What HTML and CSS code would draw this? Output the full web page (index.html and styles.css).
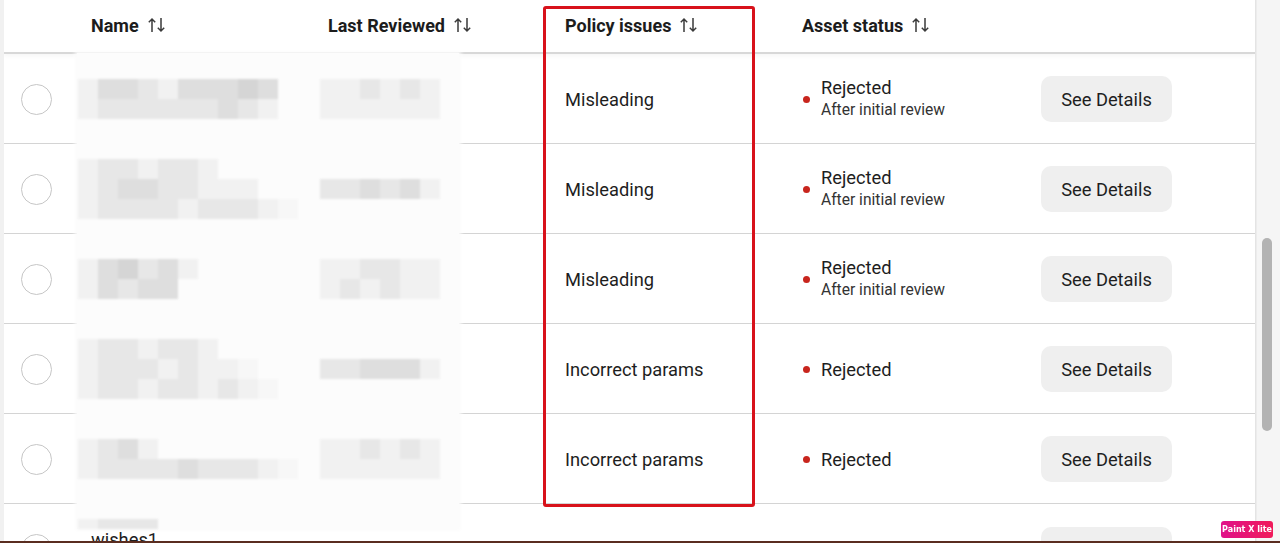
FILE: index.html
```html
<!DOCTYPE html>
<html>
<head>
<meta charset="utf-8">
<link rel="stylesheet" href="styles.css">
</head>
<body>
<div class="app">
  <div class="gutter"></div>
  <div class="table">
    <div class="thead">
      <div></div>
      <div class="th">Name <svg class="sort" viewBox="0 0 18 16"><path d="M4 15V2M0.8 5.2L4 2l3.2 3.2M13 1v13M9.8 10.8L13 14l3.2-3.2"/></svg></div>
      <div class="th">Last Reviewed <svg class="sort" viewBox="0 0 18 16"><path d="M4 15V2M0.8 5.2L4 2l3.2 3.2M13 1v13M9.8 10.8L13 14l3.2-3.2"/></svg></div>
      <div class="th">Policy issues <svg class="sort" viewBox="0 0 18 16"><path d="M4 15V2M0.8 5.2L4 2l3.2 3.2M13 1v13M9.8 10.8L13 14l3.2-3.2"/></svg></div>
      <div class="th">Asset status <svg class="sort" viewBox="0 0 18 16"><path d="M4 15V2M0.8 5.2L4 2l3.2 3.2M13 1v13M9.8 10.8L13 14l3.2-3.2"/></svg></div>
      <div></div>
    </div>

    <div class="row">
      <div class="sel"><span class="radio"></span></div>
      <div></div><div></div>
      <div class="policy">Misleading</div>
      <div class="status"><span class="dot"></span><div><div class="st">Rejected</div><div class="sub">After initial review</div></div></div>
      <div class="act"><button class="btn">See Details</button></div>
    </div>
    <div class="row">
      <div class="sel"><span class="radio"></span></div>
      <div></div><div></div>
      <div class="policy">Misleading</div>
      <div class="status"><span class="dot"></span><div><div class="st">Rejected</div><div class="sub">After initial review</div></div></div>
      <div class="act"><button class="btn">See Details</button></div>
    </div>
    <div class="row">
      <div class="sel"><span class="radio"></span></div>
      <div></div><div></div>
      <div class="policy">Misleading</div>
      <div class="status"><span class="dot"></span><div><div class="st">Rejected</div><div class="sub">After initial review</div></div></div>
      <div class="act"><button class="btn">See Details</button></div>
    </div>
    <div class="row">
      <div class="sel"><span class="radio"></span></div>
      <div></div><div></div>
      <div class="policy">Incorrect params</div>
      <div class="status"><span class="dot"></span><div><div class="st">Rejected</div></div></div>
      <div class="act"><button class="btn">See Details</button></div>
    </div>
    <div class="row">
      <div class="sel"><span class="radio"></span></div>
      <div></div><div></div>
      <div class="policy">Incorrect params</div>
      <div class="status"><span class="dot"></span><div><div class="st">Rejected</div></div></div>
      <div class="act"><button class="btn">See Details</button></div>
    </div>

    <div class="blur">
      <div class="orow">
        <div class="mz name-mz">
          <i class="s1"></i><i class="s3"></i><i class="s3"></i><i class="s2"></i><i class="s1"></i><i class="s3"></i><i class="s3"></i><i class="s3"></i><i class="s4"></i><i class="s3"></i><i></i>
          <i class="s1"></i><i class="s2"></i><i class="s2"></i><i class="s2"></i><i class="s2"></i><i class="s2"></i><i class="s2"></i><i class="s3"></i><i class="s2"></i><i class="s1"></i><i></i>
        </div>
        <div class="mz date-mz">
          <i class="s1"></i><i class="s1"></i><i class="s2"></i><i class="s1"></i><i class="s2"></i><i class="s1"></i>
          <i class="s1"></i><i class="s1"></i><i class="s1"></i><i class="s1"></i><i class="s1"></i><i class="s1"></i>
        </div>
      </div>
      <div class="orow">
        <div class="mz name-mz">
          <i class="s1"></i><i class="s2"></i><i class="s2"></i><i class="s1"></i><i class="s2"></i><i class="s2"></i><i class="s1"></i><i></i><i></i><i></i><i></i>
          <i class="s1"></i><i class="s2"></i><i class="s3"></i><i class="s3"></i><i class="s2"></i><i class="s2"></i><i class="s1"></i><i class="s1"></i><i class="s1"></i><i></i><i></i>
          <i class="s1"></i><i class="s2"></i><i class="s2"></i><i class="s2"></i><i class="s2"></i><i class="s1"></i><i class="s2"></i><i class="s2"></i><i class="s2"></i><i class="s1"></i><i class="s0"></i>
        </div>
        <div class="mz date-mz">
          <i class="s2"></i><i class="s2"></i><i class="s3"></i><i class="s2"></i><i class="s3"></i><i class="s1"></i>
        </div>
      </div>
      <div class="orow">
        <div class="mz name-mz">
          <i class="s1"></i><i class="s3"></i><i class="s4"></i><i class="s2"></i><i class="s3"></i><i class="s1"></i><i></i><i></i><i></i><i></i><i></i>
          <i class="s1"></i><i class="s3"></i><i class="s2"></i><i class="s3"></i><i class="s3"></i><i></i><i></i><i></i><i></i><i></i><i></i>
        </div>
        <div class="mz date-mz">
          <i class="s1"></i><i class="s1"></i><i class="s2"></i><i class="s2"></i><i class="s1"></i><i class="s1"></i>
          <i class="s1"></i><i class="s2"></i><i class="s1"></i><i class="s2"></i><i class="s1"></i><i class="s1"></i>
        </div>
      </div>
      <div class="orow">
        <div class="mz name-mz">
          <i class="s1"></i><i class="s2"></i><i class="s2"></i><i class="s1"></i><i class="s2"></i><i class="s2"></i><i class="s1"></i><i></i><i></i><i></i><i></i>
          <i class="s1"></i><i class="s2"></i><i class="s2"></i><i class="s2"></i><i class="s1"></i><i class="s2"></i><i class="s1"></i><i class="s1"></i><i class="s0"></i><i></i><i></i>
          <i class="s1"></i><i class="s2"></i><i class="s2"></i><i class="s1"></i><i class="s2"></i><i class="s2"></i><i class="s1"></i><i class="s2"></i><i class="s1"></i><i class="s0"></i><i></i>
        </div>
        <div class="mz date-mz">
          <i class="s2"></i><i class="s2"></i><i class="s3"></i><i class="s3"></i><i class="s3"></i><i class="s1"></i>
        </div>
      </div>
      <div class="orow">
        <div class="mz name-mz">
          <i class="s1"></i><i class="s2"></i><i class="s3"></i><i class="s1"></i><i></i><i></i><i></i><i></i><i></i><i></i><i></i>
          <i class="s1"></i><i class="s2"></i><i class="s2"></i><i class="s2"></i><i class="s2"></i><i class="s3"></i><i class="s2"></i><i class="s2"></i><i class="s2"></i><i class="s1"></i><i class="s0"></i>
        </div>
        <div class="mz date-mz">
          <i class="s1"></i><i class="s1"></i><i class="s2"></i><i class="s1"></i><i class="s2"></i><i class="s1"></i>
          <i class="s1"></i><i class="s1"></i><i class="s1"></i><i class="s1"></i><i class="s1"></i><i class="s1"></i>
        </div>
      </div>
      <div class="orow last">
        <div class="mz small-mz">
          <i class="s1"></i><i class="s2"></i><i class="s2"></i><i class="s2"></i>
        </div>
      </div>
    </div>

    <div class="row partial">
      <div class="sel"><span class="radio"></span></div>
      <div class="name">wishes1</div><div></div>
      <div class="policy"></div>
      <div class="status"></div>
      <div class="act"><button class="btn">See Details</button></div>
    </div>

    <div class="highlight"></div>
  </div>
  <div class="scrollbar"><div class="thumb"></div></div>
</div>
<div class="badge">Paint X lite</div>
<div class="bottom-bar"></div>
</body>
</html>
```

FILE: styles.css
```css
* { box-sizing: border-box; }
html, body { margin: 0; padding: 0; }
body {
  width: 1280px;
  height: 543px;
  overflow: hidden;
  background: #fff;
  font-family: Roboto, "Liberation Sans", Arial, sans-serif;
  color: #1e1e1e;
}
.app {
  display: flex;
  height: 543px;
}
.gutter {
  width: 4px;
  background: #f1f1f1;
  flex: none;
}
.table {
  position: relative;
  width: 1252px;
  flex: none;
  overflow: hidden;
  border-right: 1px solid #e4e4e4;
}
.thead, .row {
  display: grid;
  grid-template-columns: 73px 237px 237px 237px 239px 1fr;
}
.thead {
  height: 54px;
  border-bottom: 2px solid #d8d8d8;
  align-items: center;
  box-shadow: 0 2px 4px rgba(0,0,0,0.04);
}
.th {
  padding-left: 14px;
  font-size: 18px;
  font-weight: 700;
  color: #1c1c1c;
  display: flex;
  align-items: center;
  gap: 9px;
  padding-bottom: 2px;
}
.sort {
  width: 18px;
  height: 16px;
  fill: none;
  stroke: #3a3a3a;
  stroke-width: 1.5;
}
.row {
  height: 90px;
  border-bottom: 1px solid #d4d4d4;
  align-items: center;
  padding-top: 1px;
}
.row.partial {
  position: absolute;
  left: 0;
  right: 0;
  top: 504px;
  border-bottom: none;
}
.sel {
  padding-left: 17px;
  display: flex;
  align-items: center;
}
.radio {
  width: 31px;
  height: 31px;
  border: 1.5px solid #c6c6c6;
  border-radius: 50%;
  display: block;
}
.policy {
  padding-left: 14px;
  font-size: 18.3px;
}
.name {
  padding-left: 14px;
  font-size: 18.3px;
  align-self: start;
  padding-top: 23px;
  line-height: 23px;
}
.status {
  padding-left: 15px;
  display: flex;
  align-items: center;
  gap: 11px;
}
.dot {
  width: 7px;
  height: 7px;
  border-radius: 50%;
  background: #c8251d;
  flex: none;
}
.st {
  font-size: 18.3px;
  line-height: 23px;
}
.sub {
  font-size: 15.6px;
  line-height: 23px;
  color: #333;
}
.act {
  padding-left: 14px;
}
.btn {
  width: 131px;
  height: 46px;
  border: none;
  border-radius: 10px;
  background: #efefef;
  font-family: inherit;
  font-size: 18.3px;
  color: #1e1e1e;
  padding: 0;
}

/* blurred overlay over name / date columns */
.blur {
  position: absolute;
  left: 73px;
  top: 53px;
  width: 382px;
  height: 476px;
  background: #fcfcfc;
  box-shadow: 0 0 4px 2px #fcfcfc;
  display: flex;
  flex-direction: column;
}
.orow {
  height: 90px;
  display: flex;
  align-items: center;
  flex: none;
  padding-top: 2px;
}
.orow.last {
  height: 26px;
  align-items: flex-end;
  padding-top: 0;
}
.mz {
  display: grid;
  grid-auto-rows: 20px;
  filter: blur(0.8px);
}
.mz i { display: block; }
.name-mz {
  grid-template-columns: repeat(11, 20px);
  margin-left: 1px;
  width: 242px;
}
.date-mz {
  grid-template-columns: repeat(6, 20px);
}
.small-mz {
  grid-template-columns: repeat(4, 20px);
  grid-auto-rows: 10px;
  margin-left: 1px;
}
.s0 { background: #f7f7f7; }
.s1 { background: #f1f1f1; }
.s2 { background: #e7e7e7; }
.s3 { background: #dedede; }
.s4 { background: #d5d5d5; }

.highlight {
  position: absolute;
  left: 539px;
  top: 6px;
  width: 212px;
  height: 501px;
  border: 3px solid #d8121b;
  border-radius: 3px;
}

.scrollbar {
  width: 24px;
  flex: none;
  background: #f5f5f5;
  border-left: 1px solid #ececec;
  padding-top: 238px;
  padding-left: 5px;
}
.thumb {
  width: 10px;
  height: 193px;
  border-radius: 5px;
  background: #b3b3b3;
}
.badge {
  position: fixed;
  left: 1221px;
  top: 521px;
  width: 52px;
  height: 17px;
  border-radius: 3px;
  background: linear-gradient(90deg, #e0118a, #f01a5a);
  color: #fff;
  font-family: "DejaVu Sans", sans-serif;
  font-weight: 700;
  font-size: 8px;
  line-height: 17px;
  text-align: center;
  white-space: nowrap;
}
.bottom-bar {
  position: fixed;
  left: 0;
  bottom: 0;
  width: 1280px;
  height: 2px;
  background: #5a2d20;
}
```
